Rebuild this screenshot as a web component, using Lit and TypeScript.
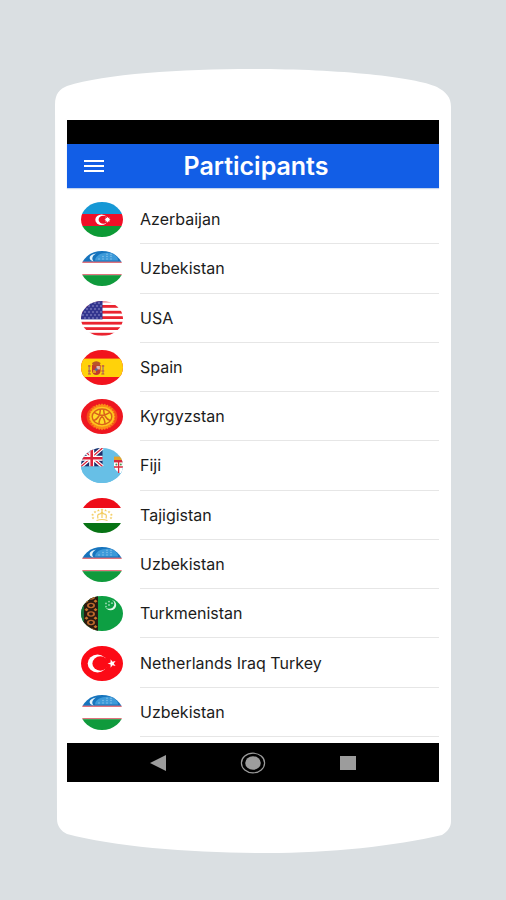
import { LitElement, html, svg, css, TemplateResult } from "lit";
import { customElement, property } from "lit/decorators.js";

const star = (cx: number, cy: number, r: number, points = 5, inner = 0.4, turn = -90) => {
  const p: string[] = [];
  for (let i = 0; i < points * 2; i++) {
    const a = ((turn + (i * 180) / points) * Math.PI) / 180;
    const q = i % 2 ? r * inner : r;
    p.push(`${(cx + q * Math.cos(a)).toFixed(2)},${(cy + q * Math.sin(a)).toFixed(2)}`);
  }
  return p.join(" ");
};

// Each flag is drawn on a 42 x 35 field and clipped to an ellipse by the host element.
const flags: Record<string, () => TemplateResult> = {
  az: () => svg`
    <rect width="42" height="12" fill="#1698d5"/>
    <rect y="12" width="42" height="12" fill="#f00f27"/>
    <rect y="24" width="42" height="11" fill="#0c9a35"/>
    <ellipse cx="20.5" cy="17.7" rx="6.2" ry="5.2" fill="#fff"/>
    <ellipse cx="22.4" cy="17.7" rx="4.8" ry="4" fill="#f00f27"/>
    <polygon points=${star(26.5, 17.7, 3, 8, 0.6)} fill="#fff"/>`,
  uz: () => svg`
    <rect width="42" height="35" fill="#fff"/>
    <rect width="42" height="11" fill="#1674bd"/>
    <rect y="10.6" width="42" height="1.4" fill="#e0737d"/>
    <rect y="23" width="42" height="1.4" fill="#e0737d"/>
    <rect y="24.2" width="42" height="11" fill="#0f9a3c"/>
    <path d="M14 9.6C14 4 22 1 29 2C34 3 37 6 37 9.6Z" fill="#3d9ad9"/>
    <path d="M15 2.4C7 4 7 9 12.500 10.400C10.400 8 11 5 15 2.400Z" fill="#e6f4fc"/>
    <g fill="#7fbfe8">
      <circle cx="22" cy="5.5" r=".8"/><circle cx="26" cy="5.5" r=".8"/><circle cx="30" cy="5.5" r=".8"/>
      <circle cx="18" cy="8" r=".8"/><circle cx="22" cy="8" r=".8"/><circle cx="26" cy="8" r=".8"/>
      <circle cx="30" cy="8" r=".8"/><circle cx="26" cy="3.2" r=".8"/><circle cx="30" cy="3.4" r=".8"/>
    </g>`,
  us: () => svg`
    <rect width="42" height="35" fill="#fff"/>
    <rect width="42" height="1.6" fill="#f08a94"/>
    ${[4, 9.8, 15.2, 20.8, 26.2, 31.8].map((y) => svg`<rect y=${y} width="42" height="2.8" fill="#ea2430"/>`)}
    <rect width="21.5" height="18.4" fill="#33358f"/>
    ${[2, 5, 8, 11, 14, 17].map((y, r) =>
      [2, 6, 10, 14, 18].map((x) => svg`<circle cx=${x + (r % 2) * 2} cy=${y} r=".75" fill="#a9a6d6"/>`)
    )}`,
  es: () => svg`
    <rect width="42" height="35" fill="#f2131d"/>
    <rect y="8.6" width="42" height="18.4" fill="#ffd20a"/>
    <path d="M8.2 15v9M22 15v9" stroke="#b38a5a" stroke-width="1.6"/>
    <path d="M7 16h2.6M20.7 16h2.6M7 21h3M20.3 21h3M7 24h3M20.3 24h3" stroke="#c7453a" stroke-width="1"/>
    <path d="M11 15h8.6v6q-.6 4-4.3 4t-4.3-4z" fill="#c23a2c"/>
    <path d="M11 13q4.3-3.4 8.6 0l-1 2.6h-6.6z" fill="#b8542a"/>
    <rect x="15.5" y="16" width="3.4" height="3.4" fill="#dcb8b0"/>
    <rect x="12" y="20" width="3" height="3" fill="#e29a24"/>
    <circle cx="15.3" cy="19.6" r="1.4" fill="#5568a0"/>`,
  kg: () => svg`
    <rect width="42" height="35" fill="#ee1620"/>
    <ellipse cx="21" cy="17.8" rx="15.4" ry="12.6" fill="#f4501a"/>
    <polygon points=${star(21, 17.8, 13.6, 28, 0.86)} fill="#fb8f17"/>
    <ellipse cx="21" cy="17.8" rx="12.4" ry="10" fill="#ffc61e"/>
    <ellipse cx="21" cy="17.8" rx="9.8" ry="7.8" fill="#ffdb28" stroke="#d9621a" stroke-width="1.4"/>
    <path d="M13 13.400Q21 19 29 13.400M12.600 21.600Q19 19.500 19.400 10.600M29.400 21.600Q23 19.500 22.600 10.600M18 25.400Q18 20 21 17.500Q24 20 24 25.400"
      fill="none" stroke="#d9621a" stroke-width="1.500"/>`,
  fj: () => svg`
    <rect width="42" height="35" fill="#67bfe6"/>
    <rect width="21.5" height="18.6" fill="#1f2e6b"/>
    <path d="M0 0L21.5 18.6M21.5 0L0 18.6" stroke="#fff" stroke-width="3.6"/>
    <path d="M0 0L21.5 18.6M21.5 0L0 18.6" stroke="#dc2038" stroke-width="1.3"/>
    <path d="M10.7 0V18.6M0 10.2H21.5" stroke="#fff" stroke-width="5"/>
    <path d="M10.7 0V18.6M0 10.2H21.5" stroke="#dc2038" stroke-width="2.6"/>
    <path d="M21.5 18.6H42V35H0V18.6z" fill="#67bfe6"/>
    <path d="M33 9h9v17q-8-2-9-8z" fill="#fff"/>
    <rect x="33" y="8.6" width="9" height="3.4" fill="#e3a32b"/>
    <rect x="33" y="12" width="9" height="2.4" fill="#d8283c"/>
    <path d="M37.6 14v11M33 19h9" stroke="#d8283c" stroke-width="1.3"/>
    <circle cx="35.4" cy="16.6" r="1" fill="#4c9a50"/><circle cx="39.8" cy="16.6" r="1" fill="#4c9a50"/>`,
  tj: () => svg`
    <rect width="42" height="35" fill="#fff"/>
    <rect width="42" height="10" fill="#ee0d19"/>
    <rect y="25" width="42" height="10" fill="#077314"/>
    <path d="M15.5 22.500q5.500-2 11 0M17 20.500q-1-4 1-4.400q2 .4 3-2.600q1 3 3 2.600q2 .4 1 4.400M21 14v6" fill="none" stroke="#f3cd62" stroke-width="1.200"/>
    <g fill="#f3cd62">
      ${[[12, 20], [11.6, 16.8], [14, 14], [17.4, 12.4], [21, 11.8], [24.6, 12.4], [28, 14], [30.4, 16.8], [30, 20]].map(
        ([x, y]) => svg`<polygon points=${star(x, y, 1.6)}/>`
      )}
    </g>`,
  tm: () => svg`
    <rect width="42" height="35" fill="#0d9f43"/>
    <rect x="2" width="15" height="35" fill="#2c1a10"/>
    <rect width="3" height="35" fill="#16713a"/>
    ${[1, 9.5, 18, 26.5, 35].map(
      (y) => svg`
        <ellipse cx="10" cy=${y} rx="4" ry="2.8" fill="#b9682c"/>
        <ellipse cx="10" cy=${y} rx="2" ry="1.4" fill="#2a1a12"/>
        <path d=${`M3.5 ${y + 4.2}l2-1.6 2 1.6-2 1.6zM12.5 ${y + 4.2}l2-1.6 2 1.6-2 1.6z`} fill="#c9762c"/>`
    )}
    <ellipse cx="29.6" cy="9" rx="5.6" ry="5.2" fill="#e2f6ea"/>
    <ellipse cx="28" cy="8" rx="5.4" ry="4.8" fill="#0d9f43"/>
    <g fill="#9fdcb6">
      <circle cx="25" cy="7.4" r=".9"/><circle cx="28" cy="5.6" r=".9"/><circle cx="28" cy="9" r=".9"/>
      <circle cx="25" cy="10.6" r=".9"/><circle cx="31" cy="7.2" r=".9"/>
    </g>`,
  tr: () => svg`
    <rect width="42" height="35" fill="#fc0a16"/>
    <ellipse cx="16.5" cy="17.5" rx="9.8" ry="9" fill="#fff"/>
    <ellipse cx="19.4" cy="17.5" rx="8" ry="7.2" fill="#fc0a16"/>
    <polygon points=${star(31, 17.5, 4.4, 5, 0.4, 180)} fill="#fff"/>`,
};

interface Participant {
  flag: string;
  name: string;
}

const participants: Participant[] = [
  { flag: "az", name: "Azerbaijan" },
  { flag: "uz", name: "Uzbekistan" },
  { flag: "us", name: "USA" },
  { flag: "es", name: "Spain" },
  { flag: "kg", name: "Kyrgyzstan" },
  { flag: "fj", name: "Fiji" },
  { flag: "tj", name: "Tajigistan" },
  { flag: "uz", name: "Uzbekistan" },
  { flag: "tm", name: "Turkmenistan" },
  { flag: "tr", name: "Netherlands Iraq Turkey" },
  { flag: "uz", name: "Uzbekistan" },
];

@customElement("participant-row")
export class ParticipantRow extends LitElement {
  @property() flag = "";
  @property() name = "";

  static styles = css`
    :host {
      display: flex;
      align-items: stretch;
      height: 100%;
      padding-left: 14px;
      gap: 17px;
    }
    .flag {
      flex: none;
      align-self: center;
      width: 42px;
      height: 35px;
      border-radius: 50%;
      overflow: hidden;
    }
    .name {
      flex: 1;
      display: flex;
      align-items: center;
      border-bottom: 1px solid #e6e6e6;
      font-size: 16px;
      line-height: 20px;
      color: #1c1c1c;
    }
  `;

  render() {
    return html`
      <svg class="flag" viewBox="0 0 42 35" preserveAspectRatio="none" aria-hidden="true">
        ${flags[this.flag]?.()}
      </svg>
      <span class="name">${this.name}</span>
    `;
  }
}

@customElement("app-root")
export class AppRoot extends LitElement {
  static styles = css`
    :host {
      display: flex;
      box-sizing: border-box;
      min-height: 100vh;
      padding: 69px 55px 47px;
      background: #dadfe2;
      font-family: Inter, Roboto, "Liberation Sans", sans-serif;
    }
    .phone {
      position: relative;
      flex: 1;
      display: flex;
      flex-direction: column;
      padding: 51px 12px 71px;
    }
    .shell {
      position: absolute;
      inset: 0;
      width: 100%;
      height: 100%;
    }
    .screen {
      position: relative;
      flex: 1;
      display: flex;
      flex-direction: column;
    }
    .status {
      height: 24px;
      background: #000;
    }
    .bar {
      display: flex;
      align-items: center;
      height: 44px;
      background: #125ee6;
      box-shadow: 0 1px 1px #c4d4ee;
      color: #fff;
    }
    button {
      display: grid;
      place-items: center;
      padding: 0;
      border: 0;
      background: none;
      color: inherit;
      cursor: pointer;
    }
    .menu {
      width: 54px;
      height: 44px;
    }
    .title {
      flex: 1;
      margin: 0;
      padding-right: 48px;
      text-align: center;
      font-size: 25px;
      line-height: 28px;
      font-weight: 600;
    }
    .list {
      flex: 1;
      display: grid;
      grid-auto-rows: minmax(48px, 1fr);
      margin: 0;
      padding: 7px 0 6px;
      list-style: none;
    }
    .nav {
      display: flex;
      justify-content: center;
      height: 39px;
      background: #000;
      color: #9c9c9c;
    }
    .key {
      width: 95px;
      height: 100%;
    }
  `;

  render() {
    return html`
      <main class="phone">
        <svg class="shell" viewBox="0 0 396 784" preserveAspectRatio="none" aria-hidden="true">
          <path
            fill="#fff"
            d="M0 36C0 24 5 20 12 17C50 5 125 0 198 0C285 0 360 8 382 18C391 23 396 28 396 38V752C396 758 393 762 387 766C340 777 275 784 212 784C140 784 60 778 12 765C6 762 2 757 2 750Z"
          />
        </svg>
        <div class="screen">
          <div class="status"></div>
          <header class="bar">
            <button class="menu" type="button" aria-label="Menu">
              <svg width="20" height="12" viewBox="0 0 20 12" fill="currentColor">
                <path d="M0 0h20v2H0zM0 5h20v2H0zM0 10h20v2H0z" />
              </svg>
            </button>
            <h1 class="title">Participants</h1>
          </header>
          <ul class="list">
            ${participants.map(
              (p) => html`<li><participant-row .flag=${p.flag} .name=${p.name}></participant-row></li>`
            )}
          </ul>
          <nav class="nav">
            <button class="key" type="button" aria-label="Back">
              <svg width="16" height="16" viewBox="0 0 16 16" fill="currentColor"><path d="M0 8L16 0V16Z" /></svg>
            </button>
            <button class="key" type="button" aria-label="Home">
              <svg width="26" height="22" viewBox="0 0 26 22" fill="currentColor">
                <ellipse cx="13" cy="11" rx="7.8" ry="6.8" />
                <ellipse cx="13" cy="11" rx="11.6" ry="9.8" fill="none" stroke="currentColor" stroke-width="1.2" />
              </svg>
            </button>
            <button class="key" type="button" aria-label="Recent">
              <svg width="16" height="14" viewBox="0 0 16 14" fill="currentColor"><rect width="16" height="14" /></svg>
            </button>
          </nav>
        </div>
      </main>
    `;
  }
}
